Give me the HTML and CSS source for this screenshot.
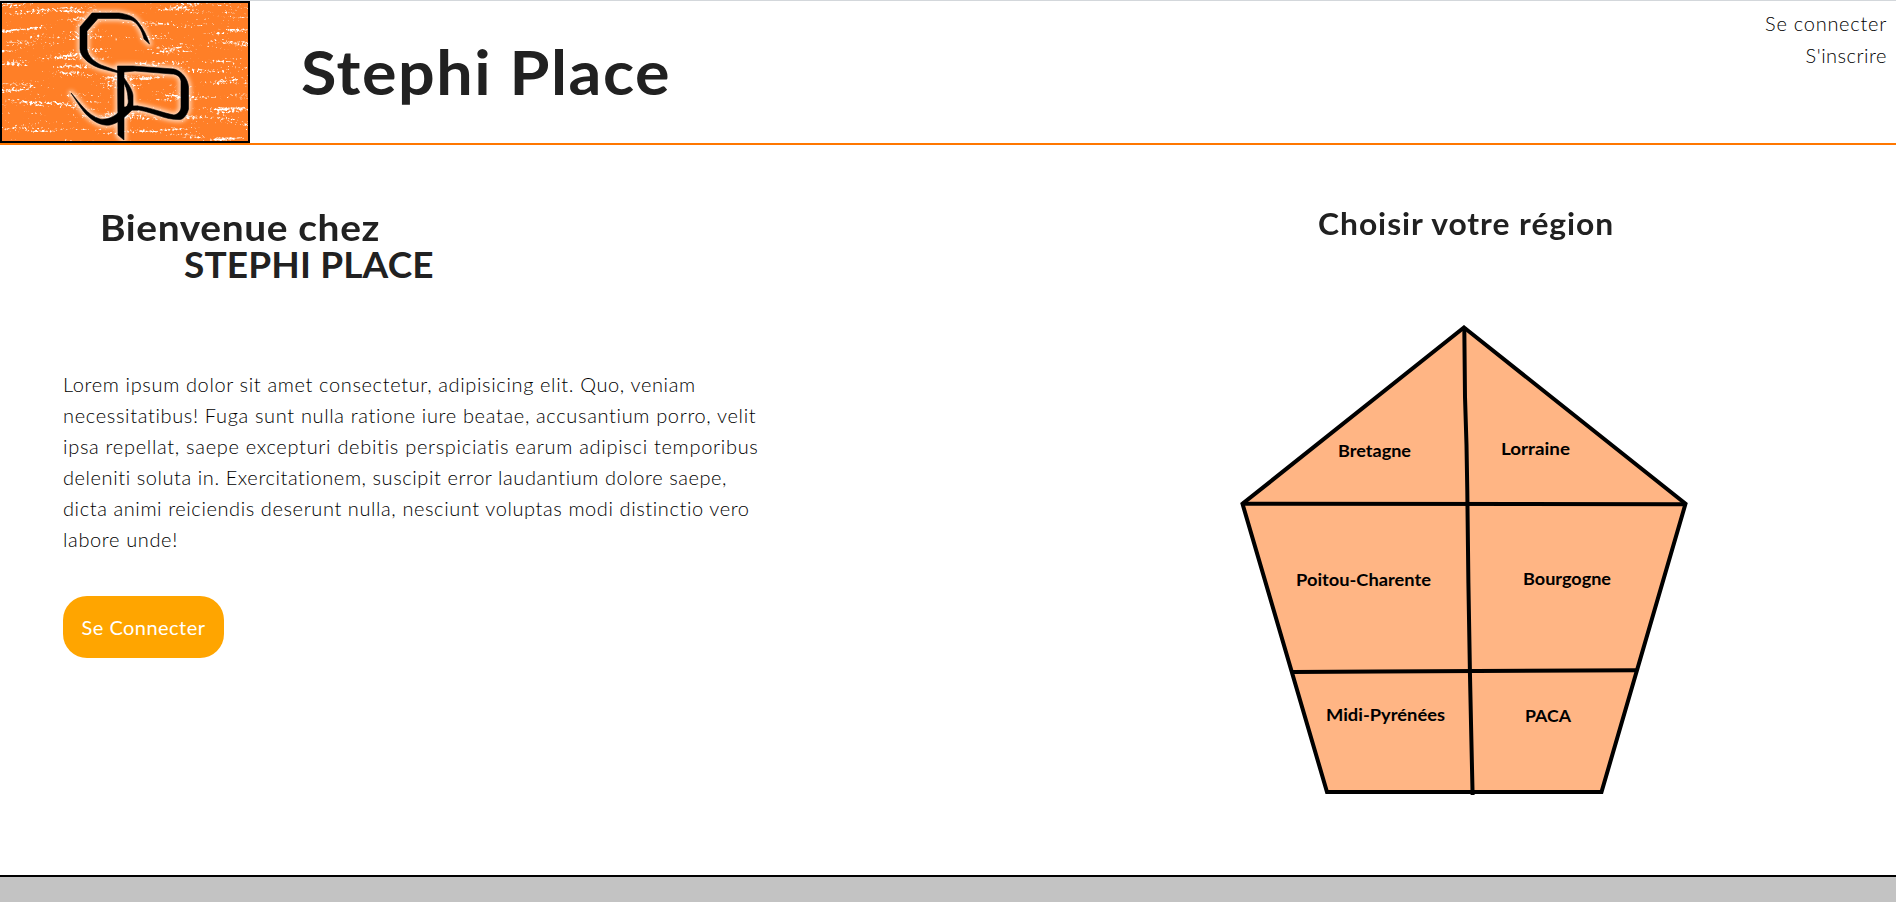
FILE: index.html
```
<!DOCTYPE html>
<html lang="fr">
<head>
<meta charset="utf-8">
<title>Stephi Place</title>
<link rel="stylesheet" href="styles.css">
</head>
<body>
<header class="header">
  <svg class="logo" viewBox="0 0 250 142" role="img" aria-label="Logo Stephi Place">
    <defs>
      <filter id="streaks" x="0" y="0" width="100%" height="100%" color-interpolation-filters="sRGB">
        <feTurbulence type="fractalNoise" baseFrequency="0.02 0.15" numOctaves="3" seed="11" result="long"/>
        <feTurbulence type="fractalNoise" baseFrequency="0.4 0.5" numOctaves="2" seed="3" result="fine"/>
        <feComposite in="long" in2="fine" operator="arithmetic" k2="0.68" k3="0.5"/>
        <feColorMatrix values="0 0 0 0 1  0 0 0 0 1  0 0 0 0 1  9 0 0 0 -5.3"/>
      </filter>
      <filter id="soft"><feGaussianBlur stdDeviation="2"/></filter>
      <g id="mark" stroke-linejoin="round">
        <path d="M149.500 43 L144 38 C142 29 137 21 131 19 L118 17.500 H98 L87 30 V48 C88 56 95 61 101 64 L118 70 L119 72 L103 68 C91 65 81 57 80 49 V26 L92 12 H119 C127 13 135 16 138 21 C143 27 147 35 149.500 43Z"/>
        <path d="M71 92 C80 102 87 114 100 118 C107 119 114 116 119 111 C128 107 129 102 128 98 C128 90 125 83 121 77 L124 77 C130 85 133 91 133 95 V105 H138 V109 H132 C126 115 119 122 110 124 C99 126 87 116 81 107 Z"/>
        <path fill-rule="evenodd" d="M117.500 65 H133 L174 68 C182 70 188 78 188.500 86 V108 C187 114 184 118 180 118.500 C165 119 155 112 139 109 H124 V139 L118 134Z M124 71 V106 L138 105 C152 107 163 112 174 114 C179 113 181 109 181 106 V80 C180 75 176 73 172 73 L135 70Z"/>
      </g>
    </defs>
    <rect width="250" height="142" fill="#ff7f27"/>
    <rect width="250" height="142" filter="url(#streaks)"/>
    <use href="#mark" fill="none" stroke="#fff" stroke-width="5" opacity=".7" filter="url(#soft)"/>
    <use href="#mark" fill="#000" stroke="#000" stroke-width=".6"/>
    <rect x="1" y="1" width="248" height="140" fill="none" stroke="#000" stroke-width="2"/>
  </svg>
  <h1 class="brand"><span>Stephi Place</span></h1>
  <nav class="nav"><a class="login">Se connecter</a><a class="signup">S'inscrire</a></nav>
</header>
<main class="main">
  <section class="intro">
    <h2 class="welcome"><span class="w1">Bienvenue chez</span><span class="w2">STEPHI PLACE</span></h2>
    <p class="text">
      <span class="l1">Lorem ipsum dolor sit amet consectetur, adipisicing elit. Quo, veniam</span>
      <span class="l2">necessitatibus! Fuga sunt nulla ratione iure beatae, accusantium porro, velit</span>
      <span class="l3">ipsa repellat, saepe excepturi debitis perspiciatis earum adipisci temporibus</span>
      <span class="l4">deleniti soluta in. Exercitationem, suscipit error laudantium dolore saepe,</span>
      <span class="l5">dicta animi reiciendis deserunt nulla, nesciunt voluptas modi distinctio vero</span>
      <span class="l6">labore unde!</span>
    </p>
    <a class="button">Se Connecter</a>
  </section>
  <section class="regions">
    <h3 class="choose"><span>Choisir votre région</span></h3>
    <svg class="map" viewBox="1240 325 448 471">
      <path d="M1464 327.5 L1685.500 503.8 L1601.500 792 H1327 L1242.500 503.8Z" fill="#ffb584"/>
      <g fill="none" stroke="#000" stroke-width="4">
        <path d="M1464 327.5 L1685.500 503.8 L1601.500 792 H1327 L1242.500 503.8Z"/>
        <path d="M1464.300 327 L1465 397 L1466.500 445 L1467.300 491 L1468.400 583 L1470 676 L1471 723 L1472.600 795"/>
        <path d="M1242 503.7 L1686 504.3"/>
        <path d="M1292 672 L1378 671.600 L1637 670.2"/>
      </g>
      <g class="labels">
        <text x="1338" y="456.5" textLength="73" lengthAdjust="spacingAndGlyphs">Bretagne</text>
        <text x="1501" y="454.5" textLength="69" lengthAdjust="spacingAndGlyphs">Lorraine</text>
        <text x="1296" y="586" textLength="135" lengthAdjust="spacingAndGlyphs">Poitou-Charente</text>
        <text x="1523" y="585" textLength="88" lengthAdjust="spacingAndGlyphs">Bourgogne</text>
        <text x="1326" y="721" textLength="119" lengthAdjust="spacingAndGlyphs">Midi-Pyrénées</text>
        <text x="1525" y="722" textLength="46" lengthAdjust="spacingAndGlyphs">PACA</text>
      </g>
    </svg>
  </section>
</main>
<footer class="footer"></footer>
</body>
</html>
```
FILE: styles.css
```
* { box-sizing: border-box; }
body { margin: 0; height: 902px; overflow: hidden; display: flex; flex-direction: column; background: #fff; color: #212121; font-family: Lato, "Open Sans", sans-serif; }
h1, h2, h3, p { margin: 0; }
.header { display: flex; height: 145px; border-top: 1px solid #d3d7db; border-bottom: 2px solid #ff7700; }
.logo { width: 250px; height: 142px; display: block; }
.brand { margin-left: 51px; padding-top: 33px; font-size: 61px; line-height: 76px; font-weight: 700; white-space: nowrap; }
.brand span { display: inline-block; transform: scaleX(1.06); transform-origin: left; letter-spacing: 1.45px; }
.nav { margin-left: auto; padding: 6px 9px 0 0; display: flex; flex-direction: column; align-items: flex-end; font-size: 20px; line-height: 32px; font-weight: 300; color: #000; }
.login { letter-spacing: .74px; }
.signup { letter-spacing: .5px; }
.main { flex: 1; display: flex; justify-content: space-between; }
.intro { width: 780px; padding: 63px 0 0 63px; }
.welcome { display: flex; flex-direction: column; align-items: flex-start; font-size: 37px; line-height: 37px; font-weight: 700; padding-left: 37px; }
.w1 { transform: scaleX(1.05); transform-origin: left; letter-spacing: .6px; }
.w2 { margin-left: 84px; letter-spacing: .15px; }
.text { margin-top: 87px; font-size: 20px; line-height: 31px; font-weight: 300; white-space: nowrap; color: #000; font-variant-ligatures: none; }
.text span { display: block; }
.l1 { letter-spacing: .64px; }
.l2 { letter-spacing: .66px; }
.l3 { letter-spacing: .7px; }
.l4 { letter-spacing: .58px; }
.l5 { letter-spacing: .6px; }
.l6 { letter-spacing: .64px; }
.button { display: flex; justify-content: center; align-items: center; margin-top: 41px; width: 161px; height: 62px; border-radius: 24px; background: orange; color: #fff; font-size: 20px; letter-spacing: .45px; }
.regions { width: 448px; margin-right: 208px; padding-top: 59px; }
.choose { padding-left: 78px; font-size: 30px; line-height: 38px; font-weight: 700; white-space: nowrap; }
.choose span { display: inline-block; transform: scaleX(1.06); transform-origin: left; letter-spacing: .9px; }
.map { display: block; width: 448px; height: 471px; margin-top: 83px; }
.labels { font: 700 17px Lato, sans-serif; }
.footer { height: 27px; border-top: 2px solid #000; background: #c3c3c3; }
```
